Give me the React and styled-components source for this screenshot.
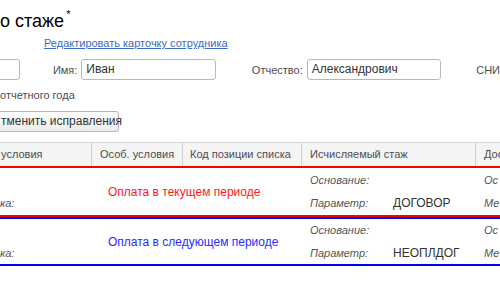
import React from 'react';
import styled, { createGlobalStyle } from 'styled-components';

const GlobalStyle = createGlobalStyle`
  html, body {
    margin: 0;
    padding: 0;
    background: #fff;
    overflow: hidden;
  }
  body {
    font-family: "Liberation Sans", Arial, sans-serif;
    color: #4d4d4d;
  }
`;

const Page = styled.div`
  width: 500px;
  height: 300px;
  overflow: hidden;
  padding-top: 4px;
  box-sizing: border-box;
`;

const Title = styled.h1`
  margin: 0;
  height: 24px;
  line-height: 24px;
  font-size: 18px;
  font-weight: normal;
  color: #000;
  white-space: nowrap;

  sup {
    font-size: 11px;
    margin-left: 2px;
    position: relative;
    top: -2px;
  }
`;

const LinkRow = styled.div`
  margin-top: 8px;
  padding-left: 44px;
  height: 14px;
  line-height: 14px;
  font-size: 11px;

  a {
    color: #3a6cc2;
    text-decoration: underline;
  }
`;

const FieldsRow = styled.div`
  margin-top: 9px;
  display: flex;
  align-items: center;
  height: 21px;
  font-size: 11px;
  white-space: nowrap;
`;

const Label = styled.span`
  color: #4d4d4d;
  margin-left: ${(p) => p.$gap}px;
  margin-right: 4px;
`;

const Input = styled.div`
  box-sizing: border-box;
  height: 21px;
  width: ${(p) => p.$w}px;
  margin-left: ${(p) => p.$ml || 0}px;
  border: 1px solid #b8b8b8;
  border-radius: 3px;
  background: #fff;
  padding: 0 4px;
  line-height: 19px;
  font-size: 12px;
  color: #333;
`;

const Tail = styled.span`
  margin-left: 35px;
  color: #4d4d4d;
`;

const Note = styled.div`
  margin-top: 8px;
  height: 14px;
  line-height: 14px;
  font-size: 11px;
  white-space: nowrap;
`;

const Button = styled.div`
  margin-top: 9px;
  margin-left: -10px;
  width: 129px;
  height: 21px;
  box-sizing: border-box;
  border: 1px solid #b5b5b5;
  border-radius: 3px;
  background: linear-gradient(#ffffff, #ececec);
  font-size: 12px;
  line-height: 19px;
  padding-left: 10px;
  color: #333;
  white-space: nowrap;
`;

const Table = styled.div`
  margin-top: 10px;
  border-top: 1px solid #d6d6d6;
  width: 520px;
`;

const HeadRow = styled.div`
  display: flex;
  height: 23px;
  background: #f4f4f4;
  font-size: 11px;
  line-height: 23px;
  white-space: nowrap;
`;

const HeadCell = styled.div`
  width: ${(p) => p.$w}px;
  flex: none;
  box-sizing: border-box;
  padding-left: ${(p) => p.$pl}px;
  border-right: ${(p) => (p.$last ? 'none' : '1px solid #d0d0d0')};
  color: #4d4d4d;
  overflow: hidden;
`;

const DataRow = styled.div`
  display: flex;
  height: ${(p) => p.$h}px;
  border-top: 2px solid ${(p) => p.$color};
  border-bottom: 2px solid ${(p) => p.$color};
  white-space: nowrap;
`;

const LeftPart = styled.div`
  width: 302px;
  flex: none;
  display: flex;
`;

const SubCol = styled.div`
  display: flex;
  flex-direction: column;
  width: ${(p) => p.$w}px;
  flex: none;
  box-sizing: border-box;
  padding-left: ${(p) => p.$pl || 0}px;
`;

const Line = styled.div`
  flex: 1;
  display: flex;
  align-items: center;
  font-size: 11px;
`;

const Italic = styled.span`
  font-style: italic;
  color: #555;
  width: ${(p) => p.$w || 'auto'};
  display: inline-block;
`;

const Value = styled.span`
  color: #333;
  font-size: 12px;
`;

const Caption = styled.div`
  flex: 1;
  display: flex;
  align-items: center;
  padding-left: 40px;
  font-size: 12px;
  color: ${(p) => p.$color};
`;

const rows = [
  { color: '#ff0000', text: '#ff1a1a', h: 47, caption: 'Оплата в текущем периоде', param: 'ДОГОВОР' },
  { color: '#0000ff', text: '#2a2aff', h: 45, caption: 'Оплата в следующем периоде', param: 'НЕОПЛДОГ' },
];

export default function App() {
  return (
    <Page>
      <GlobalStyle />
      <Title>
        о стаже<sup>*</sup>
      </Title>
      <LinkRow>
        <a>Редактировать карточку сотрудника</a>
      </LinkRow>
      <FieldsRow>
        <Input $w={40} $ml={-20} />
        <Label $gap={33}>Имя:</Label>
        <Input $w={135}>Иван</Input>
        <Label $gap={36}>Отчество:</Label>
        <Input $w={135}>Александрович</Input>
        <Tail>СНИ</Tail>
      </FieldsRow>
      <Note>отчетного года</Note>
      <Button>тменить исправления</Button>
      <Table>
        <HeadRow>
          <HeadCell $w={92} $pl={1}>условия</HeadCell>
          <HeadCell $w={91} $pl={8}>Особ. условия</HeadCell>
          <HeadCell $w={119} $pl={7}>Код позиции списка</HeadCell>
          <HeadCell $w={174} $pl={8}>Исчисляемый стаж</HeadCell>
          <HeadCell $w={44} $pl={8} $last>Дос</HeadCell>
        </HeadRow>
        {rows.map((r) => (
          <DataRow key={r.caption} $color={r.color} $h={r.h}>
            <LeftPart>
              <SubCol $w={68}>
                <Line />
                <Line>
                  <Italic>ка:</Italic>
                </Line>
              </SubCol>
              <Caption $color={r.text}>{r.caption}</Caption>
            </LeftPart>
            <SubCol $w={174} $pl={8}>
              <Line>
                <Italic>Основание:</Italic>
              </Line>
              <Line>
                <Italic $w="83px">Параметр:</Italic>
                <Value>{r.param}</Value>
              </Line>
            </SubCol>
            <SubCol $w={44} $pl={8}>
              <Line>
                <Italic>Ос</Italic>
              </Line>
              <Line>
                <Italic>Ме</Italic>
              </Line>
            </SubCol>
          </DataRow>
        ))}
      </Table>
    </Page>
  );
}
